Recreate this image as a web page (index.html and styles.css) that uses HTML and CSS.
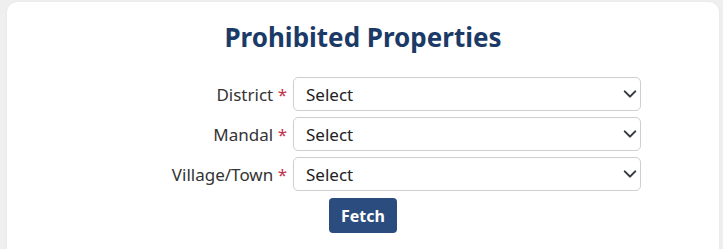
FILE: index.html
```html
<!DOCTYPE html>
<html lang="en">
<head>
  <meta charset="UTF-8" />
  <meta name="viewport" content="width=device-width, initial-scale=1.0"/>
  <title>Prohibited Properties</title>
  <link rel="stylesheet" href="styles.css">
</head>
<body>
  <div class="card">
    <h2 class="title">Prohibited Properties</h2>

    <form class="search-form">
      <label for="district">District <span class="req">*</span></label>
      <div class="select-wrap">
        <select id="district">
          <option>Select</option>
        </select>
        <svg class="chevron" viewBox="0 0 16 16"><path d="M2 5l6 6 6-6"/></svg>
      </div>

      <label for="mandal">Mandal <span class="req">*</span></label>
      <div class="select-wrap">
        <select id="mandal">
          <option>Select</option>
        </select>
        <svg class="chevron" viewBox="0 0 16 16"><path d="M2 5l6 6 6-6"/></svg>
      </div>

      <label for="village">Village/Town <span class="req">*</span></label>
      <div class="select-wrap">
        <select id="village">
          <option>Select</option>
        </select>
        <svg class="chevron" viewBox="0 0 16 16"><path d="M2 5l6 6 6-6"/></svg>
      </div>
    </form>

    <div class="actions">
      <button type="button" class="fetch-btn">Fetch</button>
    </div>
  </div>
</body>
</html>
```

FILE: styles.css
```css
body {
  margin: 0;
  padding: 2px 4px 0 7px;
  background-color: #efefef;
  font-family: "Noto Sans", "Open Sans", sans-serif;
  color: #333;
  overflow: hidden;
}
.card {
  background-color: white;
  border-radius: 10px 10px 0 0;
  height: 247px;
  box-shadow: 0 0 3px rgba(0, 0, 0, 0.05);
}
.title {
  margin: 0;
  padding-top: 17px;
  text-align: center;
  font-size: 26px;
  font-weight: 700;
  color: #1b3a66;
  line-height: 36px;
}
.search-form {
  display: grid;
  grid-template-columns: 280px 348px;
  column-gap: 6px;
  row-gap: 6px;
  margin-top: 22px;
  align-items: center;
}
.search-form label {
  text-align: right;
  font-size: 17px;
  color: #333;
}
.req {
  color: #c3304a;
}
.select-wrap {
  position: relative;
}
.select-wrap select {
  display: block;
  width: 100%;
  height: 34px;
  padding: 0 30px 0 12px;
  border: 1px solid #cfcfcf;
  border-radius: 5px;
  background: white;
  font-family: inherit;
  font-size: 17px;
  color: #222;
  -webkit-appearance: none;
  appearance: none;
}
.chevron {
  position: absolute;
  right: 4px;
  top: 10px;
  width: 14px;
  height: 14px;
  fill: none;
  stroke: #343a40;
  stroke-width: 2.4;
  stroke-linecap: round;
  stroke-linejoin: round;
  pointer-events: none;
}
.actions {
  text-align: center;
  margin-top: 7px;
}
.fetch-btn {
  background-color: #2b4c7e;
  color: white;
  border: none;
  border-radius: 4px;
  width: 68px;
  height: 35px;
  font-family: inherit;
  font-size: 16px;
  font-weight: 700;
  cursor: pointer;
}
```
